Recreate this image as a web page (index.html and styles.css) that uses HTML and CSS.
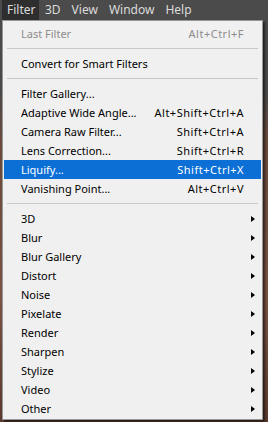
FILE: index.html
```html
<!DOCTYPE html>
<html lang="en">
  <head>
    <title>Filter menu</title>
    <meta charset="UTF-8" />
    <meta name="viewport" content="width=device-width, initial-scale=1" />
    <link rel="stylesheet" href="styles.css">
  </head>
  <body>
    <div class="menubar">
      <span class="top open">Filter</span>
      <span class="top">3D</span>
      <span class="top">View</span>
      <span class="top">Window</span>
      <span class="top">Help</span>
    </div>

    <div class="menu">
      <div class="item disabled"><span>Last Filter</span><span class="key">Alt+Ctrl+F</span></div>
      <div class="sep"></div>
      <div class="item"><span>Convert for Smart Filters</span></div>
      <div class="sep"></div>
      <div class="item"><span>Filter Gallery...</span></div>
      <div class="item"><span>Adaptive Wide Angle...</span><span class="key">Alt+Shift+Ctrl+A</span></div>
      <div class="item"><span>Camera Raw Filter...</span><span class="key">Shift+Ctrl+A</span></div>
      <div class="item"><span>Lens Correction...</span><span class="key">Shift+Ctrl+R</span></div>
      <div class="item active"><span>Liquify...</span><span class="key">Shift+Ctrl+X</span></div>
      <div class="item"><span>Vanishing Point...</span><span class="key">Alt+Ctrl+V</span></div>
      <div class="sep"></div>
      <div class="item sub"><span>3D</span><i class="arrow"></i></div>
      <div class="item sub"><span>Blur</span><i class="arrow"></i></div>
      <div class="item sub"><span>Blur Gallery</span><i class="arrow"></i></div>
      <div class="item sub"><span>Distort</span><i class="arrow"></i></div>
      <div class="item sub"><span>Noise</span><i class="arrow"></i></div>
      <div class="item sub"><span>Pixelate</span><i class="arrow"></i></div>
      <div class="item sub"><span>Render</span><i class="arrow"></i></div>
      <div class="item sub"><span>Sharpen</span><i class="arrow"></i></div>
      <div class="item sub"><span>Stylize</span><i class="arrow"></i></div>
      <div class="item sub"><span>Video</span><i class="arrow"></i></div>
      <div class="item sub"><span>Other</span><i class="arrow"></i></div>
    </div>
  </body>
</html>
```

FILE: styles.css
```css
body {
  margin: 0;
  width: 268px;
  height: 422px;
  overflow: hidden;
  font-family: "Noto Sans", "Open Sans", sans-serif;
  background: linear-gradient(to bottom, #4a4a4a 0, #4a4a4a 90px, #6a4a3c 140px, #7a5242 300px, #5a3a2e 422px);
}
.menubar {
  display: flex;
  height: 20px;
  background-color: #4b4b4b;
  color: #dcdcdc;
  font-size: 12px;
  line-height: 20px;
}
.top {
  padding: 0 5.5px;
}
.top.open {
  margin-left: 2px;
  padding: 0 4px 0 5px;
  background-color: #2e2e2e;
}
.menu {
  margin-left: 2px;
  width: 257px;
  padding: 3px 1px 1px;
  background-color: #f0f0f0;
  border: 1px solid #979797;
  box-shadow: 2px 2px 2px rgba(0, 0, 0, 0.55);
  color: #000;
  font-size: 11px;
}
.item {
  display: grid;
  grid-template-columns: 1fr auto 11px;
  align-items: center;
  height: 19px;
  padding: 0 6px 0 17px;
  white-space: nowrap;
}
.item.disabled {
  color: #8d8d8d;
}
.item.active {
  background-color: #0b6fd6;
  color: #fff;
}
.key {
  grid-column: 2;
  letter-spacing: 0.5px;
}
.sep {
  height: 1px;
  margin: 5px 3px 5px 3px;
  background-color: #c8c8c8;
}
.arrow {
  grid-column: 3;
  justify-self: end;
  width: 0;
  height: 0;
  border-top: 3.5px solid transparent;
  border-bottom: 3.5px solid transparent;
  border-left: 4px solid #000;
}
```
